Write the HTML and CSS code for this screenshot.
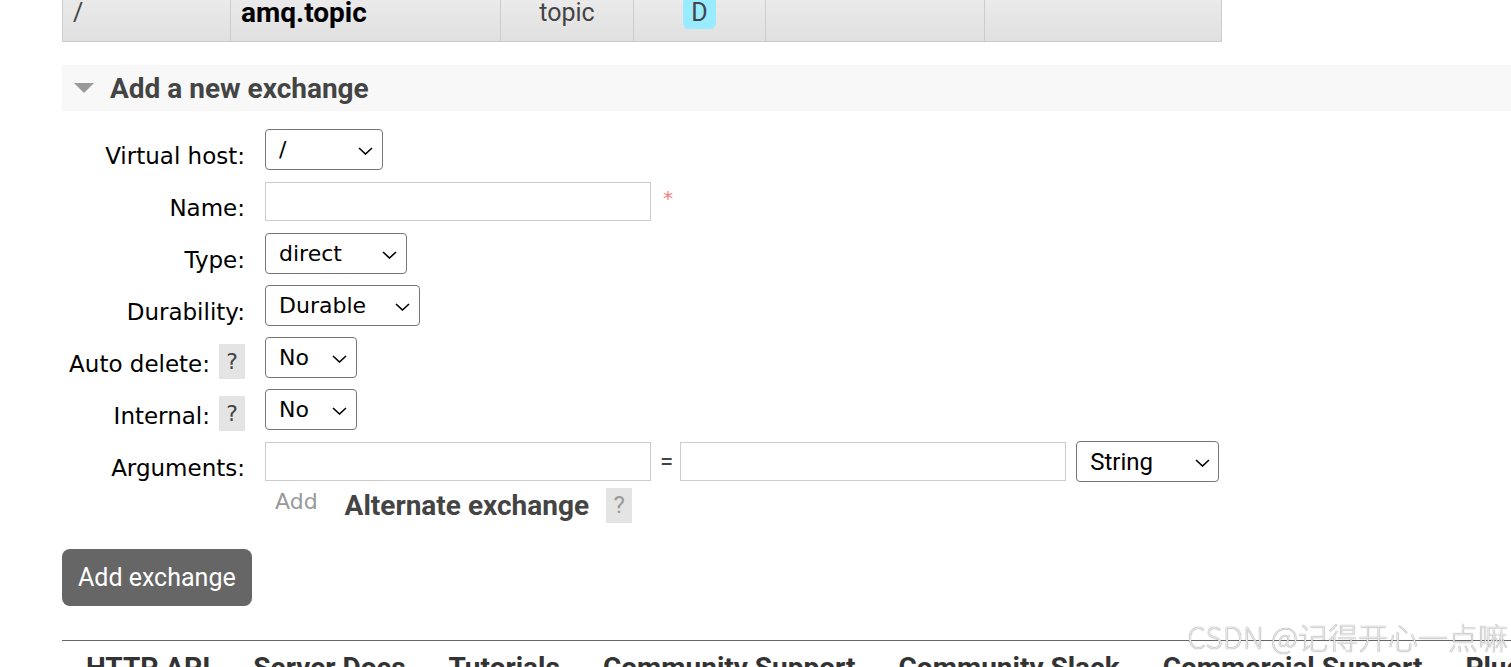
FILE: index.html
```html
<!DOCTYPE html>
<html lang="en">

<head>
  <meta charset="UTF-8">
  <meta name="viewport" content="width=device-width, initial-scale=1">
  <title>Exchanges</title>
  <link rel="stylesheet" href="styles.css">
</head>

<body>

  <div class="main">
    <table class="list">
      <tr>
        <td class="c1">/</td>
        <td class="c2"><b>amq.topic</b></td>
        <td class="c3 center">topic</td>
        <td class="c4 center"><span class="badge">D</span></td>
        <td class="c5"></td>
        <td class="c6"></td>
      </tr>
    </table>

    <!-- Add a new exchange -->
    <div class="section-head">
      <span class="arrow"></span>
      <h2>Add a new exchange</h2>
    </div>

    <div class="form">
      <div class="label"><span>Virtual host:</span></div>
      <div class="field">
        <span class="sel-wrap">
          <select class="sel vhost"><option>/</option></select>
          <svg class="chev" viewBox="0 0 15 8"><path d="M1 1 L7.5 7 L14 1"/></svg>
        </span>
      </div>

      <div class="label"><span>Name:</span></div>
      <div class="field">
        <input type="text" class="txt">
        <span class="mand">*</span>
      </div>

      <div class="label"><span>Type:</span></div>
      <div class="field">
        <span class="sel-wrap">
          <select class="sel type"><option>direct</option></select>
          <svg class="chev" viewBox="0 0 15 8"><path d="M1 1 L7.5 7 L14 1"/></svg>
        </span>
      </div>

      <div class="label"><span>Durability:</span></div>
      <div class="field">
        <span class="sel-wrap">
          <select class="sel durable"><option>Durable</option></select>
          <svg class="chev" viewBox="0 0 15 8"><path d="M1 1 L7.5 7 L14 1"/></svg>
        </span>
      </div>

      <div class="label"><span>Auto delete:</span><span class="help">?</span></div>
      <div class="field">
        <span class="sel-wrap">
          <select class="sel yesno"><option>No</option></select>
          <svg class="chev" viewBox="0 0 15 8"><path d="M1 1 L7.5 7 L14 1"/></svg>
        </span>
      </div>

      <div class="label"><span>Internal:</span><span class="help">?</span></div>
      <div class="field">
        <span class="sel-wrap">
          <select class="sel yesno"><option>No</option></select>
          <svg class="chev" viewBox="0 0 15 8"><path d="M1 1 L7.5 7 L14 1"/></svg>
        </span>
      </div>

      <div class="label"><span>Arguments:</span></div>
      <div class="field args">
        <div class="arg-row">
          <input type="text" class="txt">
          <span class="eq">=</span>
          <input type="text" class="txt">
          <span class="sel-wrap string">
            <select class="sel argtype"><option>String</option></select>
            <svg class="chev" viewBox="0 0 15 8"><path d="M1 1 L7.5 7 L14 1"/></svg>
          </span>
        </div>
        <div class="arg-extra">
          <span class="add-link">Add</span>
          <span class="alt">Alternate exchange</span>
          <span class="help light">?</span>
        </div>
      </div>
    </div>

    <button class="submit">Add exchange</button>

    <div class="footer">
      <a href="#">HTTP API</a>
      <a href="#">Server Docs</a>
      <a href="#">Tutorials</a>
      <a href="#">Community Support</a>
      <a href="#">Community Slack</a>
      <a href="#">Commercial Support</a>
      <a href="#">Plugins</a>
    </div>
  </div>

  <div class="watermark">CSDN @记得开心一点嘛</div>

</body>

</html>
```

FILE: styles.css
```css
body {
  margin: 0;
  padding: 0;
  font-family: "DejaVu Sans", Verdana, sans-serif;
  font-size: 23px;
  color: #000;
  overflow: hidden;
  height: 667px;
}

.main {
  padding-left: 62px;
}

/* exchange list, last row only */
.list {
  border-collapse: collapse;
  table-layout: fixed;
  width: 1160px;
  margin-top: -17px;
}

.list td {
  border: 1px solid #ccc;
  background: linear-gradient(#eeeeee, #e0e0e0);
  padding: 12px 10px;
  font-family: Roboto, sans-serif;
  font-size: 25px;
  line-height: 29px;
  color: #444;
  white-space: nowrap;
}

.list b {
  color: #000;
  font-size: 28px;
}

.list .c1 { width: 147px; }
.list .c2 { width: 249px; }
.list .c3 { width: 112px; }
.list .c4 { width: 111px; }
.list .c5 { width: 198px; }

.center {
  text-align: center;
}

.badge {
  display: inline-block;
  background: #99ebff;
  border-radius: 6px;
  padding: 2px 8px;
  line-height: 29px;
}

/* section header */
.section-head {
  margin-top: 23px;
  height: 46px;
  background: #f8f8f8;
  display: flex;
  align-items: center;
  padding-left: 12px;
}

.arrow {
  width: 0;
  height: 0;
  border-left: 10px solid transparent;
  border-right: 10px solid transparent;
  border-top: 10px solid #999;
  margin-right: 16px;
}

.section-head h2 {
  margin: 0;
  font-family: Roboto, sans-serif;
  font-size: 28px;
  font-weight: bold;
  color: #444;
}

/* form */
.form {
  display: grid;
  grid-template-columns: 183px auto;
  column-gap: 20px;
  row-gap: 11px;
  padding-top: 18px;
}

.label {
  display: flex;
  justify-content: flex-end;
  align-items: flex-start;
  height: 41px;
  white-space: nowrap;
}

.label span:first-child {
  margin-top: 7px;
  line-height: 40px;
}

.help {
  display: inline-block;
  width: 26px;
  height: 35px;
  line-height: 35px;
  margin-top: 7px;
  margin-left: 9px;
  background: #e4e4e4;
  color: #444;
  font-size: 22px;
  text-align: center;
}

.field {
  display: flex;
  align-items: center;
}

.sel-wrap {
  position: relative;
  display: inline-block;
}

.sel {
  -webkit-appearance: none;
  appearance: none;
  height: 41px;
  font-family: "DejaVu Sans", Verdana, sans-serif;
  font-size: 22px;
  padding: 0 30px 0 13px;
  border: 1px solid #767676;
  border-radius: 4px;
  background: #fff;
  color: #000;
  display: block;
}

.chev {
  position: absolute;
  right: 10px;
  top: 50%;
  width: 15px;
  height: 8px;
  margin-top: -3px;
  fill: none;
  stroke: #000;
  stroke-width: 1.6;
  pointer-events: none;
}

.vhost { width: 118px; }
.type { width: 142px; }
.durable { width: 155px; }
.yesno { width: 92px; }

.txt {
  width: 386px;
  height: 39px;
  box-sizing: border-box;
  border: 1px solid #ccc;
  padding: 0 6px;
  font-size: 21px;
}

.mand {
  color: #f08080;
  margin-left: 12px;
  margin-top: -8px;
  font-size: 20px;
}

.args {
  flex-direction: column;
  align-items: flex-start;
}

.arg-row {
  display: flex;
  align-items: center;
}

.eq {
  margin: 0 7px 0 9px;
  color: #444;
  font-family: Roboto, sans-serif;
  font-size: 24px;
}

.string {
  margin-left: 10px;
}

.argtype {
  width: 143px;
  font-family: Roboto, sans-serif;
  font-size: 24px;
}

.string .chev {
  right: 9px;
}

.arg-extra {
  display: flex;
  align-items: center;
  margin-top: 6px;
}

.add-link {
  color: #999;
  font-size: 22px;
  padding-left: 10px;
  margin-top: -8px;
}

.alt {
  margin-left: 27px;
  font-family: Roboto, sans-serif;
  font-size: 28px;
  font-weight: bold;
  color: #444;
}

.help.light {
  margin: 0 0 0 17px;
  color: #999;
  font-family: Roboto, sans-serif;
  font-size: 24px;
}

/* button */
.submit {
  display: block;
  margin-top: 26px;
  height: 57px;
  padding: 0 16px;
  background: #666;
  color: #fff;
  border: none;
  border-radius: 8px;
  font-family: Roboto, sans-serif;
  font-size: 25px;
  cursor: pointer;
}

/* footer */
.footer {
  margin-top: 34px;
  border-top: 1px solid #666;
  padding: 10px 0 0 24px;
  display: flex;
  gap: 43px;
  white-space: nowrap;
}

.footer a {
  font-family: Roboto, sans-serif;
  font-size: 28px;
  font-weight: bold;
  color: #333;
  text-decoration: none;
}

.watermark {
  position: fixed;
  right: 3px;
  bottom: 9px;
  font-family: "Noto Sans CJK SC", sans-serif;
  font-size: 30px;
  font-weight: 300;
  color: #e4e4e4;
  text-shadow: 0 0 1px #777;
}
```
